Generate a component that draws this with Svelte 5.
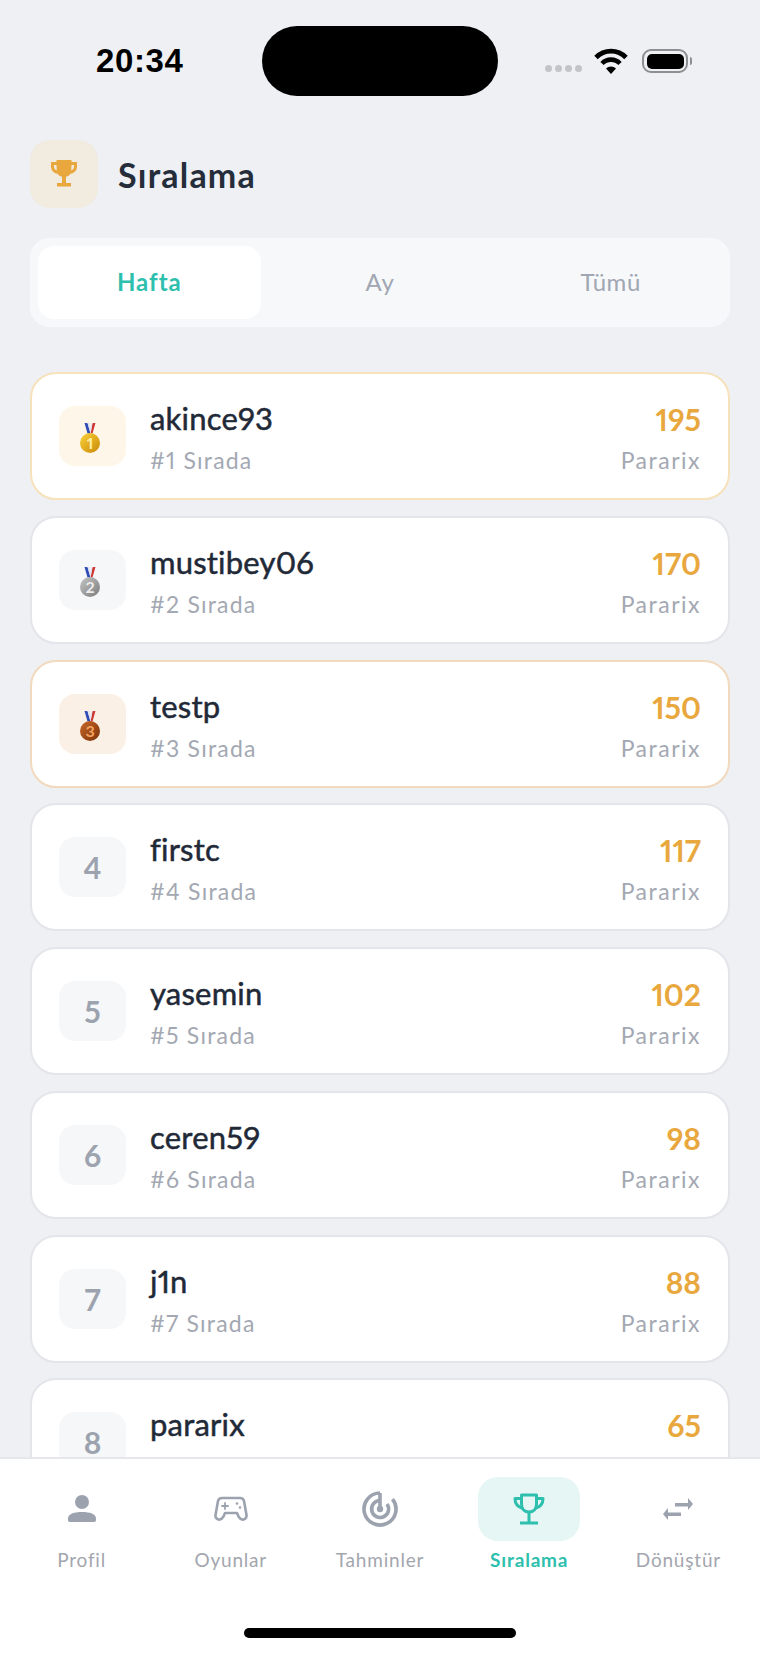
<script>
    const players = [
        { name: 'akince93', score: 195, tone: 'gold' },
        { name: 'mustibey06', score: 170, tone: 'silver' },
        { name: 'testp', score: 150, tone: 'bronze' },
        { name: 'firstc', score: 117 },
        { name: 'yasemin', score: 102 },
        { name: 'ceren59', score: 98 },
        { name: 'j1n', score: 88 },
        { name: 'pararix', score: 65 }
    ];

    const medals = {
        gold: { light: '#fbd33a', dark: '#c98806', text: '#fff0a8' },
        silver: { light: '#c4c4c4', dark: '#7c7c7c', text: '#ececec' },
        bronze: { light: '#c9692a', dark: '#7a3008', text: '#f2a35e' }
    };

    const tabs = ['Hafta', 'Ay', 'Tümü'];
    const nav = ['Profil', 'Oyunlar', 'Tahminler', 'Sıralama', 'Dönüştür'];
</script>

<div class="page">
    <div class="status">
        <span class="time">20:34</span>
        <div class="island"></div>
        <div class="status-icons">
            <div class="dots"><i></i><i></i><i></i><i></i></div>
            <svg width="34" height="26" viewBox="0 0 34 26">
                <path d="M2 9.500a21 21 0 0 1 30 0" fill="none" stroke="#000" stroke-width="4.800" />
                <path d="M8 15.500a12.500 12.500 0 0 1 18 0" fill="none" stroke="#000" stroke-width="4.600" />
                <path d="M12 20.500a7 7 0 0 1 10 0L17 26z" fill="#000" />
            </svg>
            <div class="battery"><div class="cell"></div></div>
        </div>
    </div>

    <header class="head">
        <div class="head-icon">
            <svg width="28" height="28" viewBox="0 0 28 28" fill="#e8a83e">
                <path d="M6.500 0h15v2H27v4.500c0 4-2.800 6.800-6.500 7.300-1 1.500-2.500 2.600-4.500 3V23h5v3.500H7V23h5v-6.200c-2-.4-3.500-1.500-4.500-3C3.800 13.300 1 10.500 1 6.500V2h5.500zM4 5v1.500c0 1.800 1 3.300 2.800 4L6.500 5zm20 0h-2.500l-.3 5.500c1.800-.7 2.800-2.200 2.800-4z" />
            </svg>
        </div>
        <h1>Sıralama</h1>
    </header>

    <div class="tabs">
        {#each tabs as tab, i}
            <div class="tab" class:active={i === 0}>{tab}</div>
        {/each}
    </div>

    <div class="list">
        {#each players as p, i}
            <div class="card {p.tone ?? ''}">
                <div class="rank">
                    {#if p.tone}
                        <svg class="medal" width="24" height="30" viewBox="0 0 24 30">
                            <defs>
                                <linearGradient id="medal-{p.tone}" x1="0" y1="0" x2="1" y2="1">
                                    <stop offset="0" stop-color={medals[p.tone].light} />
                                    <stop offset="1" stop-color={medals[p.tone].dark} />
                                </linearGradient>
                            </defs>
                            <path d="M6.500 0h3l3 10.500h-3z" fill="#2f4db5" />
                            <path d="M17.500 0h-3l-2 10.500h2z" fill="#cf3a36" />
                            <path d="M9.500 0h2l1 6 1-6h1l-2 10.500z" fill="#dfe3f0" />
                            <circle cx="12" cy="20" r="10" fill="url(#medal-{p.tone})" />
                            <text x="12" y="25.500" text-anchor="middle" font-size="16" font-weight="700" font-family="Lato, sans-serif" fill={medals[p.tone].text}>{i + 1}</text>
                        </svg>
                    {:else}
                        {i + 1}
                    {/if}
                </div>
                <div class="who">
                    <div class="name">{p.name}</div>
                    <div class="place">#{i + 1} Sırada</div>
                </div>
                <div class="points">
                    <div class="score">{p.score}</div>
                    <div class="unit">Pararix</div>
                </div>
            </div>
        {/each}
    </div>

    <nav class="bottom">
        <div class="items">
            {#each nav as label, i}
                <div class="item" class:current={i === 3}>
                    <div class="icon">
                        {#if i === 0}
                            <svg width="30" height="30" viewBox="0 0 30 30" fill="#9ca3af">
                                <circle cx="15" cy="8" r="7" />
                                <path d="M1 26v-1.500C1 20 7 18 15 18s14 2 14 6.500V26c0 1-.5 2-2 2H3c-1.500 0-2-1-2-2z" />
                            </svg>
                        {:else if i === 1}
                            <svg width="34" height="26" viewBox="0 0 34 26" fill="none" stroke="#9ca3af" stroke-width="2.600" stroke-linejoin="round" stroke-linecap="round">
                                <path d="M8 2h18c2 0 3.500 1 4 3l2.500 14c.4 3-2 5-4.500 4.500-1.500-.3-2.500-1.500-3.500-3L23 17H11l-1.500 3.500c-1 1.500-2 2.700-3.500 3C3.500 24 1.100 22 1.500 19L4 5c.5-2 2-3 4-3z" />
                                <path d="M11 7v6M8 10h6" stroke-width="1.800" />
                                <circle cx="23" cy="7.500" r="1.300" fill="#9ca3af" stroke="none" />
                                <circle cx="26" cy="11.500" r="1.300" fill="#9ca3af" stroke="none" />
                            </svg>
                        {:else if i === 2}
                            <svg width="36" height="36" viewBox="0 0 36 36" fill="none" stroke="#9ca3af" stroke-width="3.600">
                                <path d="M18 2a16 16 0 1 0 12.500 6" />
                                <path d="M18 9.500a8.500 8.500 0 1 0 7 3.500" />
                                <path d="M18 2v16" />
                                <circle cx="18" cy="18" r="3.200" fill="#9ca3af" stroke="none" />
                            </svg>
                        {:else if i === 3}
                            <svg width="32" height="32" viewBox="0 0 32 32" fill="none" stroke="#2ebfae" stroke-width="3" stroke-linejoin="round">
                                <path d="M8.500 2h15v9c0 5-3.200 8-7.500 8s-7.500-3-7.500-8z" />
                                <path d="M8.500 5.500H2c0 5 2.500 8.500 8 10M23.500 5.500H30c0 5-2.500 8.500-8 10" />
                                <path d="M16 19v10M7 30h18" />
                            </svg>
                        {:else}
                            <svg width="30" height="22" viewBox="0 0 30 22" fill="#9ca3af">
                                <path d="M12 5h13V0l5 6-5 6V8.500H12z" />
                                <path d="M18 14.500H5V10l-5 6 5 6v-4h13z" />
                            </svg>
                        {/if}
                    </div>
                    <span>{label}</span>
                </div>
            {/each}
        </div>
        <div class="home-bar"></div>
    </nav>
</div>

<style>
    :global(body) {
        margin: 0;
        background: #eef0f4;
    }

    .page {
        width: 760px;
        height: 1653px;
        display: flex;
        flex-direction: column;
        overflow: hidden;
        background: #eef0f4;
        font-family: Lato, "Noto Sans", sans-serif;
        font-variant-ligatures: none;
        font-variant-numeric: proportional-nums;
        color: #1f2937;
    }

    /* status bar */
    .status {
        height: 140px;
        flex: none;
        box-sizing: border-box;
        padding: 26px 68px 0 96px;
        display: flex;
        align-items: flex-start;
    }

    .time {
        width: 166px;
        margin-top: 15px;
        font-family: "Liberation Sans", sans-serif;
        font-weight: 700;
        font-size: 33px;
        line-height: 40px;
        letter-spacing: 0.6px;
        color: #000;
    }

    .island {
        width: 236px;
        height: 70px;
        border-radius: 35px;
        background: #000;
    }

    .status-icons {
        margin: 22px 0 0 47px;
        display: flex;
        align-items: center;
    }

    .dots {
        display: flex;
        gap: 3px;
        margin: 14px 12px 0 0;
    }

    .dots i {
        width: 7px;
        height: 7px;
        border-radius: 50%;
        background: #c2c4c8;
    }

    .battery {
        position: relative;
        width: 46px;
        height: 24px;
        margin-left: 14px;
        box-sizing: border-box;
        padding: 2.500px;
        border: 2px solid #8e8f93;
        border-radius: 9px;
    }

    .battery::after {
        content: '';
        position: absolute;
        right: -6px;
        top: 6px;
        width: 2px;
        height: 8px;
        border-radius: 0 2px 2px 0;
        background: #8e8f93;
    }

    .cell {
        height: 100%;
        border-radius: 5px;
        background: #000;
    }

    /* header */
    .head {
        flex: none;
        display: flex;
        align-items: center;
        gap: 20px;
        padding: 0 30px;
    }

    .head-icon {
        width: 68px;
        height: 68px;
        border-radius: 20px;
        background: #f1ebe0;
        display: flex;
        align-items: center;
        justify-content: center;
    }

    h1 {
        margin: 0;
        font-size: 34px;
        font-weight: 700;
        letter-spacing: 1.2px;
        color: #252d3b;
    }

    /* tabs */
    .tabs {
        flex: none;
        margin: 30px 30px 0;
        padding: 8px;
        border-radius: 20px;
        background: #f6f8fa;
        display: grid;
        grid-template-columns: repeat(3, 1fr);
        gap: 8px;
    }

    .tab {
        height: 73px;
        padding-bottom: 2px;
        box-sizing: border-box;
        border-radius: 16px;
        display: flex;
        align-items: center;
        justify-content: center;
        font-size: 24px;
        letter-spacing: 0.6px;
        color: #a0a6b2;
    }

    .tab.active {
        background: #fff;
        color: #2ebfae;
        font-weight: 700;
        letter-spacing: 1px;
    }

    /* leaderboard */
    .list {
        flex: 1;
        min-height: 0;
        overflow: hidden;
        margin-top: 45px;
        padding: 0 30px;
        display: flex;
        flex-direction: column;
        gap: 15.75px;
    }

    .card {
        flex: none;
        height: 128px;
        box-sizing: border-box;
        padding: 0 27px 0 27px;
        display: flex;
        align-items: center;
        background: #fff;
        border: 2px solid #e3e5ea;
        border-radius: 26px;
    }

    .card.gold {
        border-color: #f6e2ba;
    }

    .card.bronze {
        border-color: #f0d9bd;
    }

    .rank {
        width: 67px;
        height: 60px;
        border-radius: 16px;
        background: #f5f7f9;
        display: flex;
        align-items: center;
        justify-content: center;
        font-size: 30px;
        font-weight: 700;
        color: #9ca3af;
    }

    .medal {
        margin: 4px 6px 0 0;
    }

    .gold .rank {
        background: #fdf6e9;
    }

    .bronze .rank {
        background: #fbf0e6;
    }

    .who {
        flex: 1;
        margin-left: 24px;
    }

    .name {
        font-size: 31px;
        line-height: 40px;
        letter-spacing: 0.2px;
        -webkit-text-stroke: 0.5px #1f2937;
        color: #1f2937;
    }

    .place,
    .unit {
        margin-top: 8px;
        font-size: 23px;
        line-height: 28px;
        letter-spacing: 1.2px;
        color: #a3a8b2;
    }

    .unit {
        letter-spacing: 1.5px;
    }

    .points {
        text-align: right;
    }

    .score {
        padding-top: 1px;
        margin-bottom: -1px;
        font-size: 30px;
        line-height: 40px;
        font-weight: 700;
        color: #e8a83e;
    }

    /* bottom navigation */
    .bottom {
        flex: none;
        position: relative;
        height: 196px;
        box-sizing: border-box;
        background: #fff;
        border-top: 2px solid #e5e7eb;
    }

    .items {
        display: grid;
        grid-template-columns: repeat(5, 1fr);
        padding: 18px 7px 0;
    }

    .item {
        display: flex;
        flex-direction: column;
        align-items: center;
        font-size: 19px;
        letter-spacing: 0.8px;
        color: #a3a6ae;
    }

    .icon {
        width: 102px;
        height: 64px;
        border-radius: 20px;
        display: flex;
        align-items: center;
        justify-content: center;
        margin-bottom: 7px;
    }

    .item.current {
        color: #2ebfae;
        font-weight: 700;
    }

    .current .icon {
        background: #e5f6f4;
    }

    .home-bar {
        position: absolute;
        left: 244px;
        bottom: 15px;
        width: 272px;
        height: 10px;
        border-radius: 5px;
        background: #000;
    }
</style>
